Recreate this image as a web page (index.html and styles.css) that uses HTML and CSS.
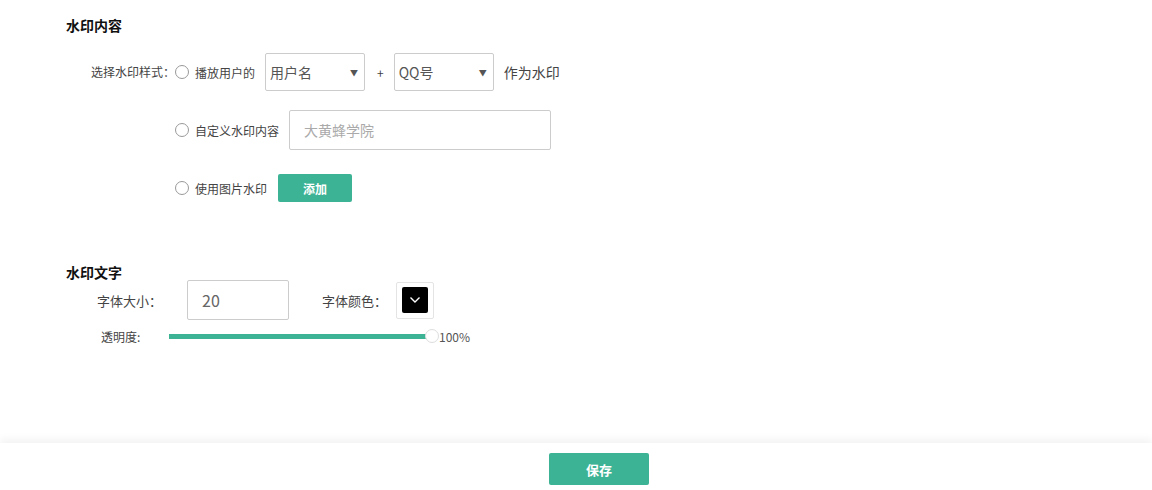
FILE: index.html
```html
<!DOCTYPE html>
<html lang="zh">
<head>
<meta charset="utf-8">
<title>水印设置</title>
<link rel="stylesheet" href="styles.css">
</head>
<body>
<div class="page">
  <main class="main">
    <section class="section">
      <h2 class="section-title">水印内容</h2>
      <div class="style-block">
        <div class="style-label">选择水印样式：</div>
        <div class="options">
          <div class="option opt-1">
            <span class="radio"></span>
            <span class="opt-text">播放用户的</span>
            <div class="select"><span class="select-value">用户名</span><span class="caret">▼</span></div>
            <span class="plus">+</span>
            <div class="select"><span class="select-value">QQ号</span><span class="caret">▼</span></div>
            <span class="suffix">作为水印</span>
          </div>
          <div class="option opt-2">
            <span class="radio"></span>
            <span class="opt-text">自定义水印内容</span>
            <div class="text-input"><span class="placeholder">大黄蜂学院</span></div>
          </div>
          <div class="option opt-3">
            <span class="radio"></span>
            <span class="opt-text">使用图片水印</span>
            <button class="btn btn-small">添加</button>
          </div>
        </div>
      </div>
    </section>
    <section class="section section-text">
      <h2 class="section-title">水印文字</h2>
      <div class="font-row">
        <span class="font-label">字体大小：</span>
        <div class="size-input">20</div>
        <span class="color-label">字体颜色：</span>
        <div class="color-box">
          <div class="color-swatch">
            <svg width="12" height="8" viewBox="0 0 12 8"><path d="M1.5 1.5 L6 6 L10.5 1.5" fill="none" stroke="#fff" stroke-width="1.4"/></svg>
          </div>
        </div>
      </div>
      <div class="opacity-row">
        <span class="opacity-label">透明度:</span>
        <div class="slider">
          <div class="track"></div>
          <span class="thumb"></span>
        </div>
        <span class="opacity-value">100%</span>
      </div>
    </section>
  </main>
  <footer class="footer">
    <button class="btn btn-save">保存</button>
  </footer>
</div>
</body>
</html>
```
FILE: styles.css
```css
* { box-sizing: border-box; }
html, body { margin: 0; padding: 0; background: #fff; }
body {
  font-family: "Noto Sans CJK SC", "Microsoft YaHei", sans-serif;
  color: #333;
  font-size: 12px;
}
.page { width: 1152px; height: 490px; display: flex; flex-direction: column; overflow: hidden; }
.main { height: 443px; padding-left: 66px; }
.section-title {
  margin: 0;
  font-size: 14px;
  font-weight: bold;
  color: #111;
  line-height: 20px;
}
.section:first-child .section-title { padding-top: 15px; }
.style-block { display: flex; margin-top: 18px; }
.style-label {
  width: 109px;
  flex: none;
  padding-left: 25px;
  line-height: 38px;
  font-size: 12px;
  color: #444;
  white-space: nowrap;
}
.options { display: flex; flex-direction: column; }
.option { display: flex; align-items: center; }
.opt-2 { margin-top: 19px; }
.opt-3 { margin-top: 24px; }
.radio {
  width: 14px; height: 14px;
  border: 1px solid #999;
  border-radius: 50%;
  background: #fff;
  flex: none;
}
.opt-text { margin-left: 6px; font-size: 12px; color: #444; }
.select {
  width: 100px; height: 38px;
  border: 1px solid #ccc;
  border-radius: 2px;
  display: flex; align-items: center; justify-content: space-between;
  padding: 0 6px 0 4px;
  margin-left: 10px;
}
.select-value { font-size: 14px; color: #555; }
.caret { font-size: 8px; color: #555; }
.plus { margin: 0 10px 0 12px; font-size: 12px; color: #444; }
.select + .plus + .select { margin-left: 0; }
.suffix { margin-left: 10px; font-size: 14px; color: #444; }
.text-input {
  width: 262px; height: 40px;
  border: 1px solid #ccc;
  border-radius: 2px;
  margin-left: 10px;
  display: flex; align-items: center;
  padding-left: 14px;
}
.placeholder { font-size: 14px; color: #aaa; }
.btn {
  border: none;
  background: #3db395;
  color: #fff;
  font-family: inherit;
  font-weight: bold;
  border-radius: 2px;
  padding: 0;
  cursor: pointer;
}
.btn-small { width: 74px; height: 28px; font-size: 12px; margin-left: 11px; }
.section-text { margin-top: 60px; }
.font-row { display: flex; align-items: center; margin-top: -2px; }
.font-label { margin-left: 31px; font-size: 13px; color: #444; width: 90px; white-space: nowrap; }
.size-input {
  width: 102px; height: 40px;
  border: 1px solid #ccc;
  border-radius: 2px;
  padding-left: 14px;
  display: flex; align-items: center;
  font-size: 16px; color: #666;
}
.color-label { margin-left: 33px; font-size: 13px; color: #444; width: 74px; white-space: nowrap; }
.color-box {
  width: 38px; height: 37px;
  border: 1px solid #e4e4e4;
  border-radius: 2px;
  display: flex; align-items: center; justify-content: center;
}
.color-swatch {
  width: 26px; height: 26px;
  background: #000;
  border-radius: 2px;
  display: flex; align-items: center; justify-content: center;
}
.opacity-row { display: flex; align-items: center; margin-top: 6px; height: 20px; }
.opacity-label { margin-left: 35px; font-size: 12px; color: #444; width: 68px; }
.slider { position: relative; width: 266px; height: 16px; display: flex; align-items: center; }
.track { width: 259px; height: 5px; background: #3db395; }
.thumb {
  position: absolute;
  left: 256px; top: 1px;
  width: 14px; height: 14px;
  border-radius: 50%;
  background: #fff;
  border: 1px solid #ddd;
}
.opacity-value { margin-left: 4px; font-size: 12px; color: #555; }
.footer {
  height: 47px;
  box-shadow: 0 -4px 8px rgba(0,0,0,0.05);
  position: relative;
  padding: 10px 0 0 549px;
}
.btn-save { width: 100px; height: 32px; font-size: 13px; }
```
